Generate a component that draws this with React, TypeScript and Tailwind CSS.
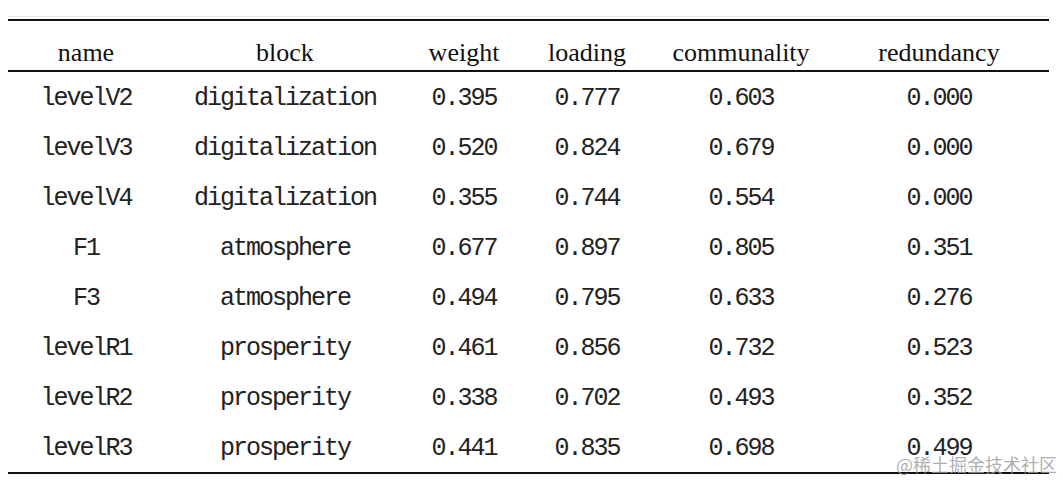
const headers = ["name", "block", "weight", "loading", "communality", "redundancy"];

const rows: string[][] = [
  ["levelV2", "digitalization", "0.395", "0.777", "0.603", "0.000"],
  ["levelV3", "digitalization", "0.520", "0.824", "0.679", "0.000"],
  ["levelV4", "digitalization", "0.355", "0.744", "0.554", "0.000"],
  ["F1", "atmosphere", "0.677", "0.897", "0.805", "0.351"],
  ["F3", "atmosphere", "0.494", "0.795", "0.633", "0.276"],
  ["levelR1", "prosperity", "0.461", "0.856", "0.732", "0.523"],
  ["levelR2", "prosperity", "0.338", "0.702", "0.493", "0.352"],
  ["levelR3", "prosperity", "0.441", "0.835", "0.698", "0.499"],
];

const cols = "grid grid-cols-[156px_242px_116px_130px_178px_218px]";

export default function App() {
  return (
    <div className="relative h-[482px] w-[1063px] overflow-hidden bg-white text-[#111]">
      <div className="ml-2 mt-4 w-[1041px]">
        {/* faint scan line above the table */}
        <div className="mb-[2px] h-px bg-[#ececec]" />

        <div className="border-y-2 border-[#111]">
          {/* Header */}
          <div
            className={`${cols} h-[51px] border-b-2 border-[#111] pt-[17px] font-['Liberation_Serif',serif] text-[26px] leading-[30px]`}
          >
            {headers.map((h) => (
              <div key={h} className="text-center">
                {h}
              </div>
            ))}
          </div>

          {/* Body */}
          {rows.map((row) => (
            <div
              key={row[0]}
              className={`${cols} h-[50px] items-center pt-1 font-['Liberation_Mono',monospace] text-[25px] tracking-[-2px] text-[#222]`}
            >
              {row.map((cell, i) => (
                <div key={i} className="text-center">
                  {cell}
                </div>
              ))}
            </div>
          ))}
        </div>
      </div>

      {/* Watermark */}
      <div className="absolute left-[896px] top-[453px] font-['Noto_Sans_CJK_SC',sans-serif] text-[18px] leading-[22px] text-[#9a9a9a]/80">
        @稀土掘金技术社区
      </div>
    </div>
  );
}
